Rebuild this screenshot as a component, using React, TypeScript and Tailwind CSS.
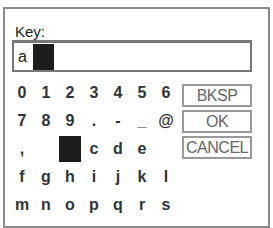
import React from 'react';

const rows: string[][] = [
  ['0', '1', '2', '3', '4', '5', '6'],
  ['7', '8', '9', '.', '-', '_', '@'],
  [',', '', '#sel', 'c', 'd', 'e', ''],
  ['f', 'g', 'h', 'i', 'j', 'k', 'l'],
  ['m', 'n', 'o', 'p', 'q', 'r', 's'],
];

const buttons = ['BKSP', 'OK', 'CANCEL'];

const App: React.FC = () => {
  return (
    <div
      className="w-[273px] h-[228px] bg-white pt-[7px] pl-[3px] overflow-hidden"
      style={{ fontFamily: '"Liberation Sans", Arial, sans-serif' }}
    >
      <div className="w-[267px] h-[221px] border-2 border-[#8a8a8a] flex flex-col">
        {/* Key label */}
        <div className="pl-[10px] pt-[14px] text-[15px] leading-[17px] text-[#222]">Key:</div>

        {/* Entry box */}
        <div className="ml-[7px] w-[240px] h-[32px] border-2 border-t-[3px] border-[#777] flex items-end">
          <span className="pl-[4px] pb-[4px] text-[16px] leading-[18px] text-[#222]">a</span>
          <span className="ml-[6px] w-[21px] h-[26px] bg-[#1c1c1c]" />
        </div>

        {/* Keyboard */}
        <div className="mt-[7px] ml-[5px] flex">
          <div className="grid grid-cols-[repeat(7,24px)] grid-rows-[repeat(5,28px)]">
            {rows.flat().map((ch, i) =>
              ch === '#sel' ? (
                <div key={i} className="flex items-center justify-center">
                  <span className="w-[22px] h-[26px] bg-[#1c1c1c]" />
                </div>
              ) : (
                <div
                  key={i}
                  className="flex items-center justify-center text-[16px] font-bold text-[#333]"
                >
                  {ch}
                </div>
              )
            )}
          </div>
          <div className="ml-[4px] mt-[5px] flex flex-col gap-[3px]">
            {buttons.map((b) => (
              <div
                key={b}
                className="w-[70px] h-[23px] border-2 border-[#999] flex items-center justify-center text-[16px] leading-none text-[#666] tracking-[-0.5px]"
              >
                {b}
              </div>
            ))}
          </div>
        </div>
      </div>
    </div>
  );
};

export default App;
